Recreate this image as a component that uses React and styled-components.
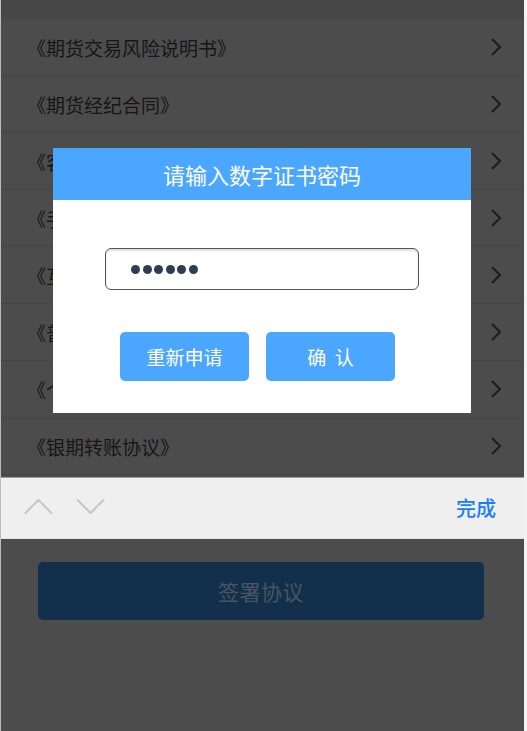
import styled, { createGlobalStyle } from 'styled-components';

const GlobalStyle = createGlobalStyle`
  html, body {
    margin: 0;
    padding: 0;
    background: #4c4c4c;
  }
  body {
    font-family: "Noto Sans CJK SC", "Noto Sans", sans-serif;
  }
  * {
    box-sizing: border-box;
  }
`;

const Screen = styled.div`
  position: relative;
  width: 527px;
  height: 731px;
  overflow: hidden;
  background: #4c4c4c;
  border-left: 1px solid #bdbdbd;
  border-right: 3px solid #f2f2f2;
`;

const TopBand = styled.div`
  height: 19px;
  background: #474747;
`;

const List = styled.ul`
  list-style: none;
  margin: 0;
  padding: 0;
`;

const Row = styled.li`
  display: flex;
  align-items: center;
  justify-content: space-between;
  height: 57px;
  padding: 0 22px 0 26px;
  border-bottom: 1px solid #454545;
  color: #161616;
  font-size: 19px;
`;

const Chevron = styled.svg`
  width: 12px;
  height: 20px;
  flex-shrink: 0;
`;

const Toolbar = styled.div`
  display: flex;
  align-items: center;
  justify-content: space-between;
  height: 62px;
  margin-top: 2px;
  padding: 0 28px 0 23px;
  background: #efefef;
  border-top: 1px solid #9c9c9c;
  border-bottom: 1px solid #e2e2e2;
`;

const NavArrows = styled.div`
  display: flex;
  gap: 23px;
  align-items: center;
  margin-top: -4px;
`;

const Done = styled.span`
  color: #1a7ef7;
  font-size: 20px;
  font-weight: 500;
  margin-top: -2px;
`;

const SignButton = styled.div`
  display: flex;
  align-items: center;
  justify-content: center;
  height: 58px;
  margin: 23px 40px 0 37px;
  border-radius: 5px;
  background: #12304b;
  color: #4a5561;
  font-size: 21px;
  letter-spacing: 0.5px;
`;

const Modal = styled.div`
  position: absolute;
  top: 148px;
  left: 52px;
  width: 418px;
  background: #ffffff;
`;

const ModalHeader = styled.div`
  height: 52px;
  display: flex;
  align-items: center;
  justify-content: center;
  background: #4ba6fe;
  color: #ffffff;
  font-size: 22px;
`;

const ModalBody = styled.div`
  display: flex;
  flex-direction: column;
  align-items: center;
  padding: 48px 0 32px;
`;

const PasswordBox = styled.div`
  display: flex;
  align-items: center;
  gap: 2.5px;
  width: 314px;
  height: 42px;
  padding-left: 25px;
  border: 1px solid #555;
  border-radius: 6px;
  box-shadow: inset 0 2px 2px rgba(0, 0, 0, 0.12);
  background: #fff;
`;

const Dot = styled.span`
  width: 9px;
  height: 9px;
  border-radius: 50%;
  background: #2d3e50;
`;

const Actions = styled.div`
  display: flex;
  gap: 17px;
  margin-top: 42px;
  margin-right: 9px;
`;

const ActionButton = styled.button`
  width: 129px;
  height: 49px;
  border: none;
  border-radius: 5px;
  background: #4ba6fe;
  color: #ffffff;
  font-family: inherit;
  font-size: 19px;
  white-space: pre;
  padding: 0;
`;

const items = [
  '《期货交易风险说明书》',
  '《期货经纪合同》',
  '《客户须知》',
  '《手续费收取标准》',
  '《互联网开户协议》',
  '《普通投资者告知书》',
  '《个人信息授权书》',
  '《银期转账协议》',
];

const ArrowRight = () => (
  <Chevron viewBox="0 0 12 20">
    <path d="M2 2 L10 10 L2 18" fill="none" stroke="#1c1c1c" strokeWidth="2" />
  </Chevron>
);

const NavIcon = ({ up }) => (
  <svg width="29" height="17" viewBox="0 0 29 17">
    <path
      d={up ? 'M1 15.5 L14.5 2 L28 15.5' : 'M1 1.5 L14.5 15 L28 1.5'}
      fill="none"
      stroke="#c6c6c6"
      strokeWidth="2"
    />
  </svg>
);

export default function App() {
  return (
    <>
      <GlobalStyle />
      <Screen>
        <TopBand />
        <List>
          {items.map((t) => (
            <Row key={t}>
              <span>{t}</span>
              <ArrowRight />
            </Row>
          ))}
        </List>
        <Toolbar>
          <NavArrows>
            <NavIcon up />
            <NavIcon />
          </NavArrows>
          <Done>完成</Done>
        </Toolbar>
        <SignButton>签署协议</SignButton>

        <Modal>
          <ModalHeader>请输入数字证书密码</ModalHeader>
          <ModalBody>
            <PasswordBox>
              {Array.from({ length: 6 }).map((_, i) => (
                <Dot key={i} />
              ))}
            </PasswordBox>
            <Actions>
              <ActionButton>重新申请</ActionButton>
              <ActionButton>确  认</ActionButton>
            </Actions>
          </ModalBody>
        </Modal>
      </Screen>
    </>
  );
}
